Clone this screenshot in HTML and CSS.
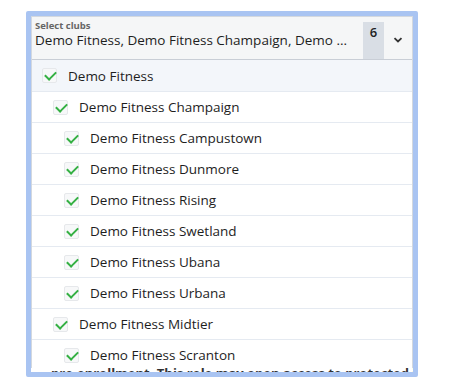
FILE: index.html
```html
<!DOCTYPE html>
<html lang="en">
<head>
  <meta charset="UTF-8">
  <title>Select clubs</title>
  <link rel="stylesheet" href="styles.css">
</head>
<body>

  <div class="frame">
    <div class="picker">

      <!-- Header -->
      <div class="picker-head">
        <div class="picker-value">
          <span class="picker-label">Select clubs</span>
          <span class="picker-text">Demo Fitness, Demo Fitness Champaign, Demo ...</span>
        </div>
        <span class="picker-count">6</span>
        <span class="picker-toggle">
          <svg width="10" height="6" viewBox="0 0 10 6"><path d="M1.5 1.2 L5 4.5 L8.5 1.2" fill="none" stroke="#333" stroke-width="1.8"/></svg>
        </span>
      </div>

      <!-- Options -->
      <ul class="options">
        <li class="option level-0 active"><span class="check"></span>Demo Fitness</li>
        <li class="option level-1"><span class="check"></span>Demo Fitness Champaign</li>
        <li class="option level-2"><span class="check"></span>Demo Fitness Campustown</li>
        <li class="option level-2"><span class="check"></span>Demo Fitness Dunmore</li>
        <li class="option level-2"><span class="check"></span>Demo Fitness Rising</li>
        <li class="option level-2"><span class="check"></span>Demo Fitness Swetland</li>
        <li class="option level-2"><span class="check"></span>Demo Fitness Ubana</li>
        <li class="option level-2"><span class="check"></span>Demo Fitness Urbana</li>
        <li class="option level-1"><span class="check"></span>Demo Fitness Midtier</li>
        <li class="option level-2"><span class="check"></span>Demo Fitness Scranton</li>
      </ul>
    </div>

    <p class="behind">pre-enrollment. This role may open access to protected information</p>
  </div>

</body>
</html>
```

FILE: styles.css
```css
* {
  margin: 0;
  padding: 0;
  box-sizing: border-box;
}

body {
  font-family: 'Open Sans', sans-serif;
  background: #fff;
  color: #222;
}

.frame {
  margin: 11px 0 0 26px;
  width: 392px;
  height: 366px;
  border: 5px solid #a9c4f2;
  border-radius: 2px;
  overflow: hidden;
  background: #fff;
}

.picker {
  border: 1px solid #d3d8df;
  border-bottom: none;
  height: 352px;
  overflow: hidden;
}

.picker-head {
  display: flex;
  align-items: stretch;
  height: 43px;
  background: #f5f6f7;
  border-bottom: 1px solid #c9ced6;
}

.picker-value {
  flex: 1;
  display: flex;
  flex-direction: column;
  padding: 3px 0 0 3px;
  min-width: 0;
}

.picker-label {
  font-size: 9.5px;
  font-weight: 700;
  color: #666;
  line-height: 12px;
}

.picker-text {
  font-size: 13.5px;
  line-height: 16px;
  white-space: nowrap;
  color: #1e1e1e;
}

.picker-count {
  width: 21px;
  margin-top: 5px;
  background: #d9dee5;
  font-size: 13px;
  font-weight: 600;
  text-align: center;
  line-height: 21px;
  color: #222;
}

.picker-toggle {
  width: 28px;
  display: flex;
  align-items: center;
  justify-content: center;
  padding-top: 3px;
}

.options {
  list-style: none;
}

.option {
  display: flex;
  align-items: center;
  height: 31px;
  border-bottom: 1px solid #e5eaf1;
  font-size: 13.5px;
  color: #1e1e1e;
}

.option:first-child {
  height: 32px;
}

.option.active {
  background: #f3f6fa;
}

.level-0 { padding-left: 10px; }
.level-1 { padding-left: 21px; }
.level-2 { padding-left: 32px; }

.check {
  width: 15px;
  height: 15px;
  margin-right: 11px;
  border: 1px solid #e6e8eb;
  border-radius: 2px;
  background: #f7f8f9;
  position: relative;
}

.check::after {
  content: "";
  position: absolute;
  left: 4px;
  top: 0px;
  width: 5px;
  height: 9px;
  border-right: 2px solid #34b043;
  border-bottom: 2px solid #34b043;
  transform: rotate(45deg);
}

.behind {
  font-size: 13px;
  font-weight: 700;
  color: #333;
  padding-left: 20px;
  margin-top: -4px;
  white-space: nowrap;
}
```
